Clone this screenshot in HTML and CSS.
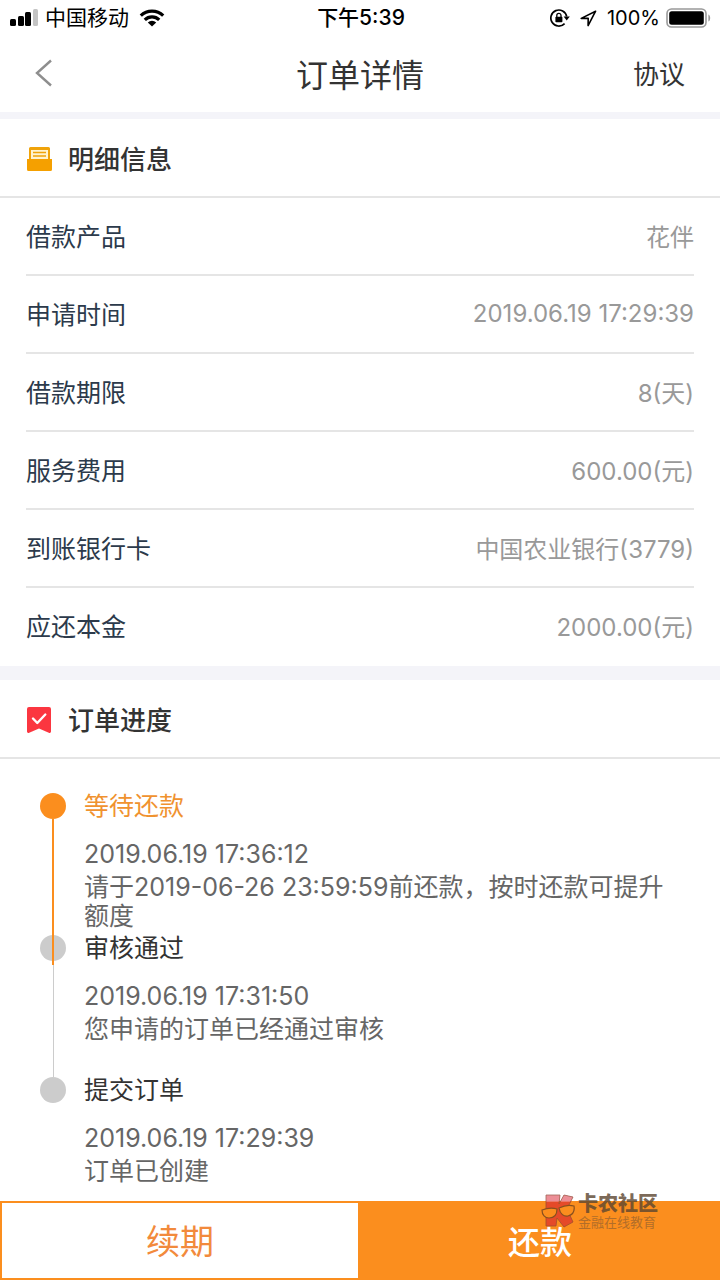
FILE: index.html
```html
<!DOCTYPE html>
<html lang="zh-CN">
<head>
    <meta charset="UTF-8">
    <meta name="viewport" content="width=device-width, initial-scale=1.0">
    <title>订单详情</title>
    <link rel="stylesheet" href="styles.css">
</head>
<body>
    <div class="status-bar">
        <div class="status-left">
            <svg class="signal" width="29" height="18" viewBox="0 0 29 18">
                <rect x="0" y="10" width="6" height="7" rx="1.5"/>
                <rect x="8" y="7" width="6" height="10" rx="1.5"/>
                <rect x="15" y="3" width="6" height="14" rx="1.5"/>
                <rect x="23" y="0" width="5" height="17" rx="1.5" fill="#c4c4c4"/>
            </svg>
            <span>中国移动</span>
            <svg class="wifi" width="26" height="18" viewBox="0 0 26 18">
                <g fill="none" stroke="#000" stroke-width="3.2">
                    <path d="M1.8 6.6a16 16 0 0 1 22.4 0"/>
                    <path d="M5.8 10.9a10.2 10.2 0 0 1 14.4 0"/>
                </g>
                <path d="M13 17.5l-4.2-4.1a6 6 0 0 1 8.4 0z"/>
            </svg>
        </div>
        <div class="status-time">下午5:39</div>
        <div class="status-right">
            <svg width="20" height="18" viewBox="0 0 20 18">
                <path d="M16.7 7.5A8 8 0 1 0 14.6 14.6" fill="none" stroke="#000" stroke-width="1.7"/>
                <path d="M13.6 7.6h6.2l-3.1 4z"/>
                <rect x="5.4" y="7.8" width="7" height="5.4" rx=".8"/>
                <path d="M6.8 8V6.4a2.1 2.1 0 0 1 4.2 0V8" fill="none" stroke="#000" stroke-width="1.3"/>
            </svg>
            <svg width="17" height="17" viewBox="0 0 17 17">
                <path d="M15.6 1.2L1.2 8.4l7-.2-.1 7.4z" fill="none" stroke="#000" stroke-width="1.6" stroke-linejoin="round"/>
            </svg>
            <span>100%</span>
            <svg class="battery" width="46" height="21" viewBox="0 0 46 21">
                <rect x="1" y="1" width="39" height="18" rx="4.5" fill="none" stroke="#999" stroke-width="1.6"/>
                <rect x="3.2" y="3.2" width="34.6" height="13.6" rx="2.5"/>
                <path d="M42.4 6.6c2.4 1 2.4 6 0 7z" fill="#999"/>
            </svg>
        </div>
    </div>

    <header class="nav">
        <button class="back" type="button" aria-label="返回">
            <svg width="18" height="28" viewBox="0 0 18 28">
                <path d="M16 1.5L2 14l14 12.5" fill="none" stroke="#8e8e8e" stroke-width="2.4"/>
            </svg>
        </button>
        <h1>订单详情</h1>
        <a class="agreement" href="#">协议</a>
    </header>

    <main>
        <section class="card">
            <h2 class="card-title">
                <svg width="26" height="26" viewBox="0 0 26 26">
                    <path d="M3 13V2.5A1.5 1.5 0 0 1 4.5 1h18A1.5 1.5 0 0 1 24 2.5V13z" fill="#f0a30a"/>
                    <rect x="5" y="4" width="17" height="9" fill="#fff3cf"/>
                    <path d="M7 6.5h13M7 10h13" stroke="#f0a30a" stroke-width="1.5"/>
                    <path d="M1 13h25v10.5a1.5 1.5 0 0 1-1.5 1.5h-22A1.5 1.5 0 0 1 1 23.5z" fill="#f5a000"/>
                </svg>
                明细信息
            </h2>
            <dl class="details">
                <div class="row"><dt>借款产品</dt><dd>花伴</dd></div>
                <div class="row"><dt>申请时间</dt><dd>2019.06.19 17:29:39</dd></div>
                <div class="row"><dt>借款期限</dt><dd>8(天)</dd></div>
                <div class="row"><dt>服务费用</dt><dd>600.00(元)</dd></div>
                <div class="row"><dt>到账银行卡</dt><dd>中国农业银行(3779)</dd></div>
                <div class="row"><dt>应还本金</dt><dd>2000.00(元)</dd></div>
            </dl>
        </section>

        <section class="card progress">
            <h2 class="card-title">
                <svg width="26" height="26" viewBox="0 0 26 26">
                    <path d="M3 0h20a2 2 0 0 1 2 2v22.5a1.5 1.5 0 0 1-2.2 1.3L13 21.5l-9.800 4.300A1.500 1.500 0 0 1 1 24.500V2a2 2 0 0 1 2-2z" fill="#fb3640"/>
                    <path d="M7 11.5l4.3 4.5 8-8.5" fill="none" stroke="#fff" stroke-width="2.4" stroke-linecap="round" stroke-linejoin="round"/>
                </svg>
                订单进度
            </h2>
            <ol class="timeline">
                <li class="step active">
                    <h3>等待还款</h3>
                    <time>2019.06.19 17:36:12</time>
                    <p>请于2019-06-26 23:59:59前还款，按时还款可提升额度</p>
                </li>
                <li class="step">
                    <h3>审核通过</h3>
                    <time>2019.06.19 17:31:50</time>
                    <p>您申请的订单已经通过审核</p>
                </li>
                <li class="step">
                    <h3>提交订单</h3>
                    <time>2019.06.19 17:29:39</time>
                    <p>订单已创建</p>
                </li>
            </ol>
        </section>
    </main>

    <footer class="actions">
        <button class="btn renew" type="button">续期</button>
        <button class="btn repay" type="button">还款</button>
        <div class="watermark">
            <svg width="34" height="36" viewBox="0 0 34 36">
                <path d="M5 3h14l-1 9 5-9 9 2-6 12 6 13-9 5-7-9-1 8H5z" fill="#e03a2c"/>
                <path d="M5 3h14l-1 7H5zM23 3l9 2-3 5H19z" fill="#e8737c"/>
                <path d="M5 3h14l-1 9 5-9 9 2-6 12 6 13-9 5-7-9-1 8H5z" fill="none" stroke="#8a4030" stroke-width=".8"/>
                <g fill="#fb8e1e" stroke="#6b4020" stroke-width="1.2">
                    <path d="M1 18q8-3 15-1c0 7-4 9-8 9s-7-3-7-8z"/>
                    <path d="M18 16q8-4 15-2c1 6-2 9-6 10s-8-2-9-8z"/>
                </g>
            </svg>
            <div>
                <strong>卡农社区</strong>
                <small>金融在线教育</small>
            </div>
        </div>
    </footer>
</body>
</html>
```

FILE: styles.css
```css
* {
    box-sizing: border-box;
    margin: 0;
    padding: 0;
}

body {
    display: flex;
    flex-direction: column;
    min-height: 100vh;
    background: #fff;
    color: #333;
    font-family: Inter, "Noto Sans CJK SC", sans-serif;
    font-size: 25px;
}

button {
    border: 0;
    background: none;
    font-family: inherit;
    cursor: pointer;
}

a {
    color: inherit;
    text-decoration: none;
}

svg {
    flex: none;
}

/* status bar */
.status-bar {
    display: grid;
    grid-template-columns: 1fr auto 1fr;
    align-items: center;
    height: 36px;
    padding: 0 8px 0 10px;
    color: #000;
    font-size: 21px;
    line-height: 28px;
}

.status-left,
.status-right {
    display: flex;
    align-items: center;
}

.status-left {
    gap: 6px;
}

.wifi {
    margin-left: 4px;
}

.status-time {
    font-weight: 500;
}

.status-right {
    justify-content: flex-end;
    gap: 10px;
    font-size: 20px;
}

.battery {
    margin-left: -4px;
}

/* header */
.nav {
    display: grid;
    grid-template-columns: 1fr auto 1fr;
    align-items: center;
    height: 76px;
    padding: 0 35px 3px;
}

.back {
    display: flex;
    justify-self: start;
}

.nav h1 {
    font-size: 32px;
    font-weight: 400;
}

.agreement {
    justify-self: end;
    font-size: 26px;
}

/* cards */
.card {
    border-top: 7px solid #f4f4f9;
}

.progress {
    border-top-width: 14px;
}

.card-title {
    display: flex;
    align-items: center;
    gap: 16px;
    height: 79px;
    padding: 0 26px;
    border-bottom: 2px solid #e5e5e5;
    font-size: 26px;
    font-weight: 500;
}

.card-title svg {
    margin-top: 2px;
}

.details {
    padding: 0 26px;
}

.row {
    display: flex;
    justify-content: space-between;
    align-items: center;
    height: 78px;
    padding-bottom: 2px;
    border-bottom: 2px solid #e5e5e5;
}

.row:last-child {
    border-bottom-color: transparent;
}

.row dt {
    color: #2c3a4b;
}

.row dd {
    color: #999;
    font-size: 24px;
}

/* timeline */
.timeline {
    padding: 30px 45px 0 40px;
    list-style: none;
}

.step {
    position: relative;
    min-height: 142px;
    padding-left: 44px;
    color: #666;
}

.step:last-child {
    min-height: 0;
}

.step::before {
    content: "";
    position: absolute;
    top: 4px;
    left: 0;
    width: 26px;
    height: 26px;
    border-radius: 50%;
    background: #ccc;
}

.step::after {
    content: "";
    position: absolute;
    top: 30px;
    bottom: -4px;
    left: 13px;
    width: 1px;
    background: #ccc;
}

.step:last-child::after {
    display: none;
}

.step.active::before,
.step.active::after {
    background: #fb8e1e;
}

/* the active line runs over the next dot */
.step.active::after {
    bottom: -34px;
    left: 12px;
    z-index: 1;
    width: 2px;
}

.step h3 {
    margin-bottom: 14px;
    color: #333;
    font-size: 25px;
    font-weight: 400;
    line-height: 34px;
}

.step.active h3 {
    color: #f0922f;
}

.step time {
    display: block;
    margin-bottom: 2px;
    line-height: 34px;
}

.step p {
    line-height: 29px;
}

/* bottom buttons */
.actions {
    position: sticky;
    bottom: 0;
    display: flex;
    height: 79px;
    margin-top: auto;
}

.btn {
    flex: 1;
    padding-bottom: 2px;
    border: 2px solid #fb8e1e;
    font-size: 32px;
}

.renew {
    background: #fff;
    color: #f28a3c;
    font-size: 34px;
}

.repay {
    background: #fb8e1e;
    color: #fff;
    font-weight: 500;
}

.watermark {
    position: absolute;
    top: -9px;
    right: 62px;
    display: flex;
    gap: 3px;
    opacity: .8;
    pointer-events: none;
}

.watermark strong,
.watermark small {
    display: block;
}

.watermark strong {
    color: #5c4630;
    font-size: 20px;
    font-weight: 900;
    line-height: 24px;
}

.watermark small {
    color: #a0662c;
    font-size: 13px;
    line-height: 12px;
}
```
